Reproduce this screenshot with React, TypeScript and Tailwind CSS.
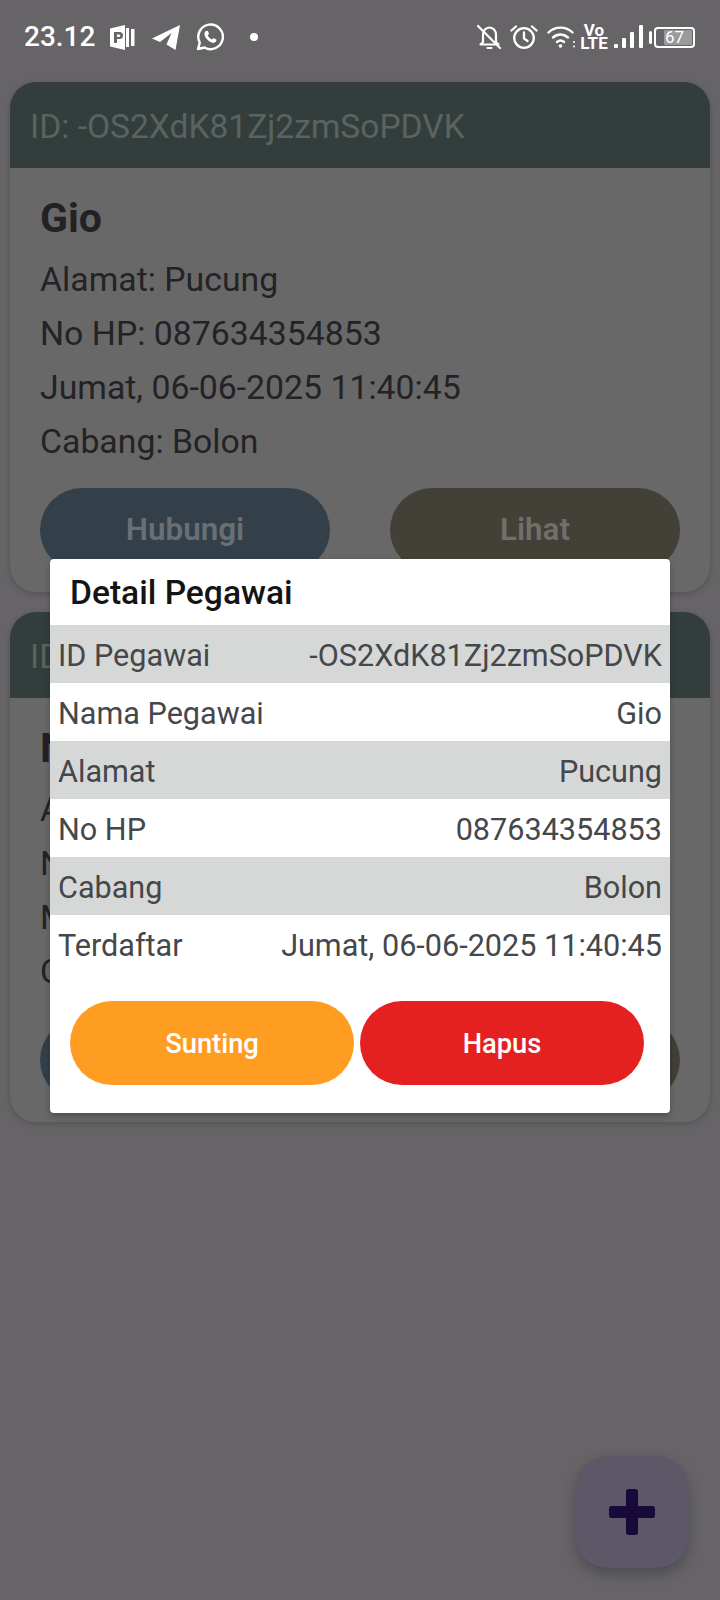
import React from "react";

const Bell = () => (
  <svg width="26" height="26" viewBox="0 0 26 26" fill="none" stroke="white" strokeWidth="2.2" strokeLinecap="round" strokeLinejoin="round" className="shrink-0">
    <path d="M7 11c0-4 2.500-7.500 6.500-7.500S20 7 20 11v7l2.500 2.500H4.500L7 18z" />
    <path d="M11.500 24h4" />
    <path d="M2 2l22 22" />
  </svg>
);
const Alarm = () => (
  <svg width="28" height="26" viewBox="0 0 28 26" fill="none" stroke="white" strokeWidth="2.3" strokeLinecap="round" className="shrink-0">
    <circle cx="14" cy="14" r="9.800" />
    <path d="M14 8.500v6l3.500 2.500" />
    <path d="M1.500 6.500L6 2.500M26.500 6.500L22 2.500" />
  </svg>
);
const Wifi = () => (
  <svg width="29" height="24" viewBox="0 0 29 24" fill="none" stroke="white" strokeWidth="2.400" strokeLinecap="round" className="shrink-0">
    <path d="M1.500 7.500C8 1 19 1 25.500 7.500" />
    <path d="M6 12.500c4.500-4 10.500-4 15 0" />
    <path d="M10 17c2.500-2 4.500-2 7 0" />
    <circle cx="13.500" cy="21" r="1.800" fill="white" stroke="none" />
    <circle cx="27" cy="17" r="1" fill="white" stroke="none" />
    <circle cx="27" cy="21.500" r="1" fill="white" stroke="none" />
  </svg>
);
const Signal = () => (
  <svg width="30" height="24" viewBox="0 0 30 24" fill="white" className="shrink-0">
    <rect x="0" y="19" width="4" height="4" rx="1" />
    <rect x="8" y="13" width="4" height="10" rx="1" />
    <rect x="16" y="7" width="4" height="16" rx="1" />
    <rect x="25" y="0" width="4" height="23" rx="1" />
  </svg>
);
const PIcon = () => (
  <svg width="25" height="25" viewBox="0 0 25 25" className="shrink-0">
    <path d="M0 3.500L15 0v25L0 21.500z" fill="white" />
    <path d="M16 3h3v19h-3zM21 4h3.500v17H21z" fill="white" />
    <path d="M4 7h5.500a3.500 3.500 0 010 7H7v4H4z" fill="#676568" />
    <path d="M7 9.500v2.500h2a1.250 1.250 0 000-2.500z" fill="white" />
  </svg>
);
const Telegram = () => (
  <svg width="28" height="25" viewBox="0 0 28 25" fill="white" className="shrink-0">
    <path d="M0 13.500L28 0l-4.500 25-9-5.500L19.500 8 8 17z" />
  </svg>
);
const Whatsapp = () => (
  <svg width="28" height="28" viewBox="0 0 28 28" fill="none" className="shrink-0">
    <path d="M2 26l1.800-6.300A12.300 12.300 0 1 1 8.500 24.500z" stroke="white" strokeWidth="2.400" strokeLinejoin="round" />
    <path d="M10.300 7.800c-1.500.8-2.300 2.600-1.600 4.700 1 3 4 6 7 7 2.200.7 4-.2 4.700-1.800l-.2-1.300-2.800-1.400-1.500 1.500c-1.800-.7-3.500-2.400-4.200-4.200l1.400-1.500-1.300-2.800z" fill="white" />
  </svg>
);

const Plus = () => (
  <svg width="46" height="46" viewBox="0 0 46 46" fill="#180a38" className="shrink-0">
    <rect x="17" y="0" width="12" height="46" rx="2.500" />
    <rect x="0" y="17" width="46" height="12" rx="2.500" />
  </svg>
);

const Card = ({ id, name, alamat, hp, date, cabang }: { id: string; name: string; alamat: string; hp: string; date: string; cabang: string }) => (
  <div className="h-[510px] rounded-[26px] bg-[#686868] overflow-hidden shadow-[0_2px_6px_rgba(0,0,0,0.18)]">
    <div className="h-[86px] bg-[#333e3c] px-5 pt-1 flex items-center text-[33.6px] text-[#5a6361]">ID: {id}</div>
    <div className="px-[30px] pt-[25px]">
      <div className="text-[41px] leading-[50px] font-bold text-[#222226]">{name}</div>
      <div className="mt-[10px] text-[33.8px] leading-[54px] text-[#232325]">
        <div>Alamat: {alamat}</div>
        <div>No HP: {hp}</div>
        <div>{date}</div>
        <div>Cabang: {cabang}</div>
      </div>
      <div className="mt-[19px] flex justify-between">
        <div className="w-[290px] h-[84px] rounded-full bg-[#33404a] flex items-center justify-center text-[31.4px] font-semibold text-[#6a6f73]">Hubungi</div>
        <div className="w-[290px] h-[84px] rounded-full bg-[#434037] flex items-center justify-center text-[31.4px] font-semibold text-[#716f6c]">Lihat</div>
      </div>
    </div>
  </div>
);

const rows: [string, string][] = [
  ["ID Pegawai", "-OS2XdK81Zj2zmSoPDVK"],
  ["Nama Pegawai", "Gio"],
  ["Alamat", "Pucung"],
  ["No HP", "087634354853"],
  ["Cabang", "Bolon"],
  ["Terdaftar", "Jumat, 06-06-2025 11:40:45"],
];

export default function App() {
  return (
    <div className="relative w-[720px] h-[1600px] overflow-hidden bg-[#666467] font-['Roboto',sans-serif]">
      <div className="h-[82px] relative">
        <div className="flex items-center h-[74px] pl-[24px] pr-[25px] text-white">
          <span className="text-[28px] font-medium w-[86px]">23.12</span>
          <PIcon />
          <span className="w-[17px]" />
          <Telegram />
          <span className="w-[16px]" />
          <Whatsapp />
          <span className="w-[26px]" />
          <span className="w-[8px] h-[8px] rounded-full bg-white" />
          <span className="flex-1" />
          <Bell />
          <span className="w-[8px]" />
          <Alarm />
          <span className="w-[9px]" />
          <Wifi />
          <span className="w-[4px]" />
          <div className="w-[28px] flex flex-col items-center font-bold leading-[13px]">
            <span className="text-[17px]">Vo</span>
            <span className="text-[17px]">LTE</span>
          </div>
          <span className="w-[6px]" />
          <Signal />
          <span className="w-[5px]" />
          <span className="w-[3px] h-[13px] bg-white rounded-sm" />
          <span className="w-[2px]" />
          <div className="w-[41px] h-[21px] rounded-[4px] border-2 border-white relative flex items-center justify-center">
            <div className="absolute right-[1px] top-[1px] bottom-[1px] left-[8px] bg-[#9a999b] rounded-[1px]" />
            <span className="relative text-[17px] leading-none text-white">67</span>
          </div>
        </div>
      </div>

      <div className="flex flex-col gap-5 px-[10px]">
        <Card id="-OS2XdK81Zj2zmSoPDVK" name="Gio" alamat="Pucung" hp="087634354853" date="Jumat, 06-06-2025 11:40:45" cabang="Bolon" />
        <Card id="-OS2XdK81Zj2zmSoPDVK" name="Nia" alamat="Pucung" hp="087634354853" date="Minggu, 06-06-2025 11:40:45" cabang="Bolon" />
      </div>

      <div className="absolute left-[50px] top-[559px] w-[620px] h-[554px] bg-white rounded-[4px] overflow-hidden shadow-[0_3px_6px_rgba(0,0,0,0.25)]">
        <div className="h-[66px] pl-5 pt-[2px] flex items-center text-[33.6px] font-medium text-[#141414]">Detail Pegawai</div>
        {rows.map(([k, v], i) => (
          <div key={k} className={`h-[58px] pl-[8px] pr-2 pt-1 flex items-center justify-between text-[30.6px] text-[#45474b] ${i % 2 === 0 ? "bg-[#d6d8d8]" : "bg-white"}`}>
            <span>{k}</span>
            <span>{v}</span>
          </div>
        ))}
        <div className="mt-7 pl-5 flex gap-[6px]">
          <div className="w-[284px] h-[84px] pt-[2px] rounded-full bg-[#ff9c22] flex items-center justify-center text-[27.3px] font-medium text-white">Sunting</div>
          <div className="w-[284px] h-[84px] pt-[2px] rounded-full bg-[#e52020] flex items-center justify-center text-[27.3px] font-medium text-white">Hapus</div>
        </div>
      </div>

      <div className="absolute left-[576px] top-[1456px] w-[112px] h-[112px] rounded-[32px] bg-[#5d5867] flex items-center justify-center shadow-[0_6px_14px_rgba(0,0,0,0.25)]">
        <Plus />
      </div>
    </div>
  );
}
